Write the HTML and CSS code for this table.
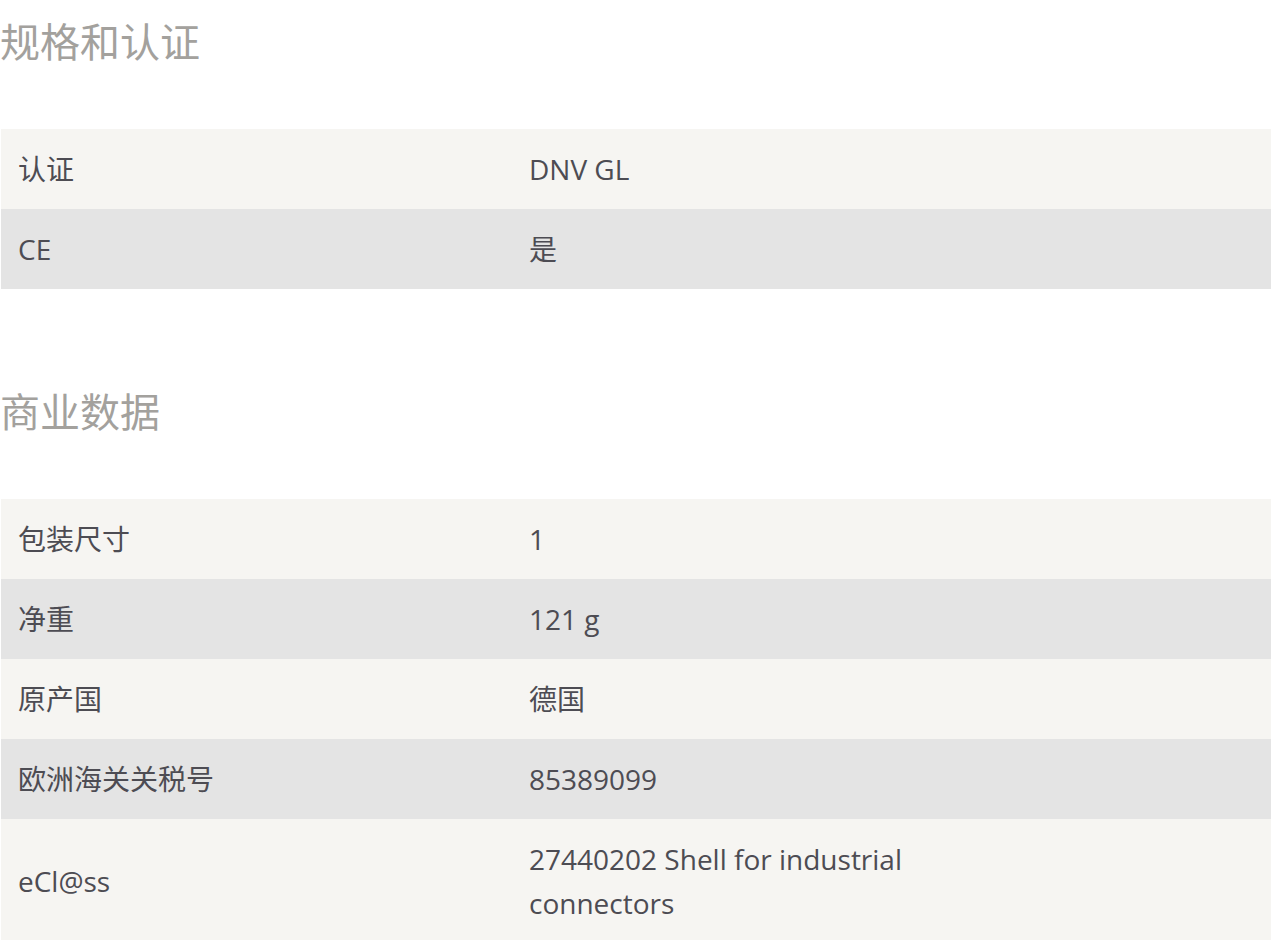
FILE: index.html
```html
<!DOCTYPE html>
<html lang="zh">
<head>
<meta charset="utf-8">
<title>规格和认证</title>
<link rel="stylesheet" href="styles.css">
</head>
<body>
<div class="page">
  <section class="section">
    <h2 class="title">规格和认证</h2>
    <div class="table">
      <div class="row odd"><div class="label">认证</div><div class="value">DNV GL</div></div>
      <div class="row even"><div class="label">CE</div><div class="value">是</div></div>
    </div>
  </section>
  <section class="section">
    <h2 class="title">商业数据</h2>
    <div class="table">
      <div class="row odd"><div class="label">包装尺寸</div><div class="value">1</div></div>
      <div class="row even"><div class="label">净重</div><div class="value">121 g</div></div>
      <div class="row odd"><div class="label">原产国</div><div class="value">德国</div></div>
      <div class="row even"><div class="label">欧洲海关关税号</div><div class="value">85389099</div></div>
      <div class="row odd"><div class="label">eCl@ss</div><div class="value">27440202 Shell for industrial connectors</div></div>
    </div>
  </section>
</div>
</body>
</html>
```

FILE: styles.css
```css
html, body {
  margin: 0;
  padding: 0;
  background: #ffffff;
}

.page {
  padding-left: 1px;
  font-family: "Open Sans", "Noto Sans CJK SC", sans-serif;
  color: #4d4c53;
  display: flex;
  flex-direction: column;
  gap: 81px;
}

.section {
  padding-top: 20px;
}

.title {
  margin: 0 0 69px -1px;
  font-family: "Noto Sans CJK SC", sans-serif;
  font-weight: 400;
  font-size: 40px;
  line-height: 40px;
  color: #a3a19d;
}

.table {
  display: flex;
  flex-direction: column;
}

.row {
  display: grid;
  grid-template-columns: 511px 490px 1fr;
  font-size: 28px;
  line-height: 44px;
}

.row.odd { background: #f6f5f2; }
.row.even { background: #e4e4e4; }

.label, .value {
  padding: 18px 17px;
  display: flex;
  align-items: center;
}
```
